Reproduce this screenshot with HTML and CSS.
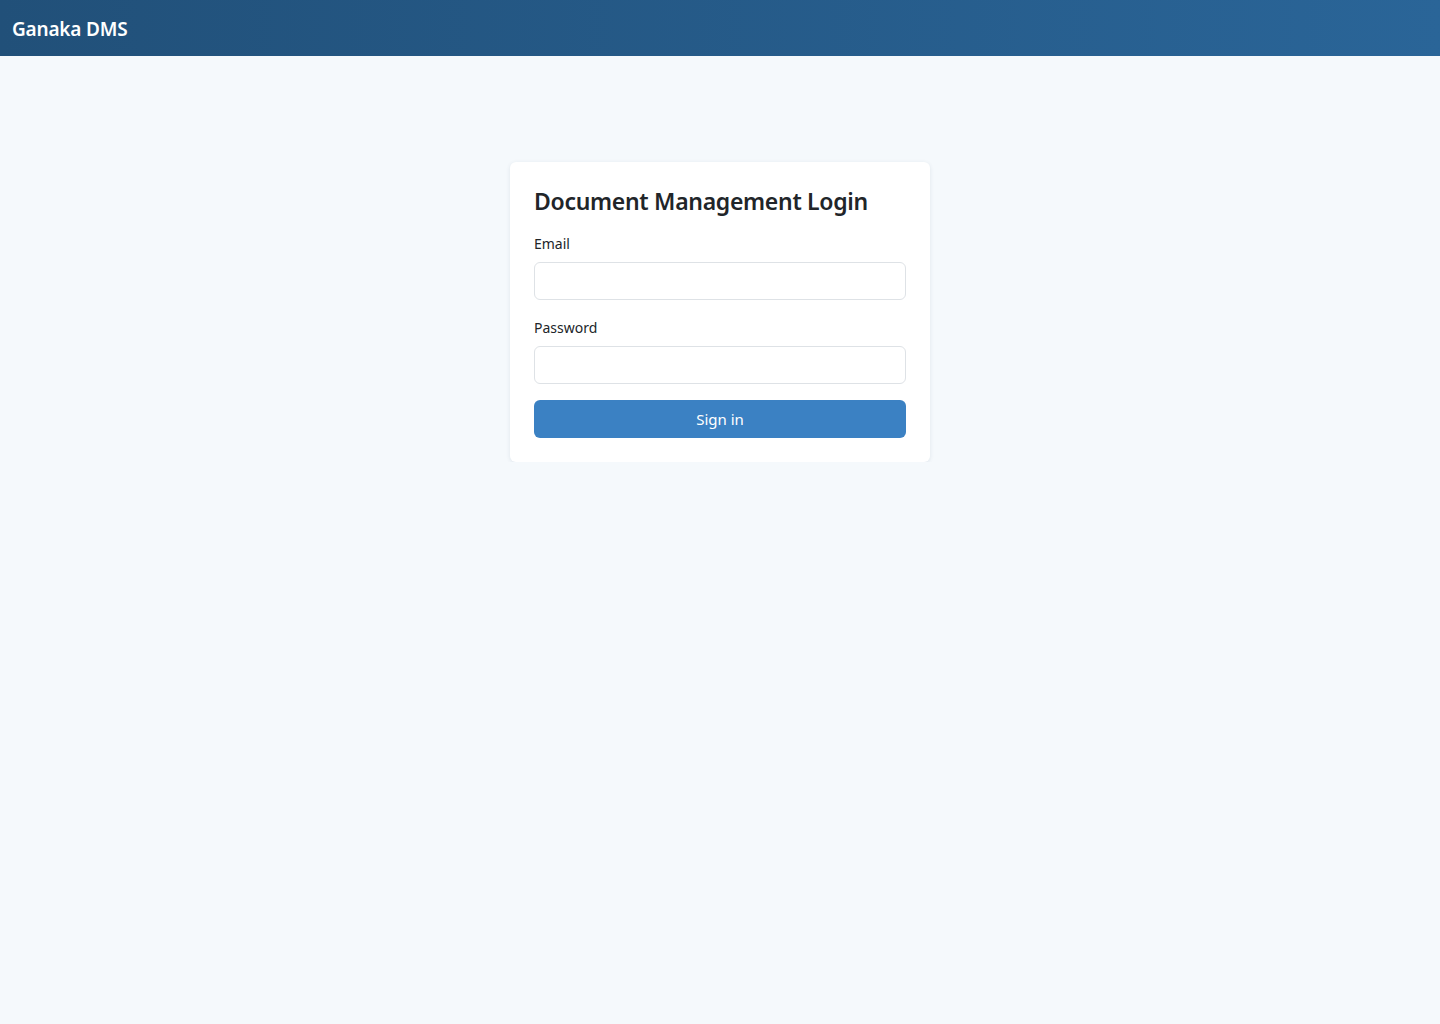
FILE: index.html
```html
<!DOCTYPE html>
<html lang="en">
<head>
  <meta charset="UTF-8">
  <title>Ganaka DMS</title>
  <link rel="stylesheet" href="styles.css">
</head>
<body>
  <header class="topbar">
    <span class="brand">Ganaka DMS</span>
  </header>

  <main class="login-wrap">
    <form class="login-card" onsubmit="return false">
      <h2>Document Management Login</h2>
      <div class="field">
        <label for="email">Email</label>
        <input id="email" type="email">
      </div>
      <div class="field">
        <label for="password">Password</label>
        <input id="password" type="password">
      </div>
      <button type="submit">Sign in</button>
    </form>
  </main>
</body>
</html>
```

FILE: styles.css
```css
body {
  margin: 0;
  font-family: "Noto Sans", "Open Sans", sans-serif;
  background: #f5f9fc;
  color: #212529;
}

.topbar {
  height: 56px;
  display: flex;
  align-items: center;
  padding: 2px 12px 0 12px;
  background: linear-gradient(90deg, #215079 0%, #2a6598 100%);
  box-sizing: border-box;
}
.brand {
  color: #fff;
  font-size: 19px;
  font-weight: 600;
  letter-spacing: -0.2px;
}

.login-wrap {
  display: flex;
  justify-content: center;
  padding-top: 106px;
}

.login-card {
  width: 420px;
  box-sizing: border-box;
  background: #fff;
  border-radius: 6px;
  box-shadow: 0 1px 4px rgba(30, 60, 90, 0.10);
  padding: 24px;
  display: flex;
  flex-direction: column;
}
.login-card h2 {
  margin: 0 0 18px 0;
  font-size: 23px;
  font-weight: 600;
  color: #212529;
  letter-spacing: -0.3px;
  line-height: 30px;
}

.field {
  display: flex;
  flex-direction: column;
  margin-bottom: 16px;
}
.field + .field {
  margin-top: 2px;
}
.field label {
  font-size: 14px;
  line-height: 20px;
  margin-bottom: 8px;
  color: #212529;
}
.field input {
  height: 38px;
  box-sizing: border-box;
  border: 1px solid #dee2e6;
  border-radius: 6px;
  padding: 6px 12px;
  font-size: 16px;
  font-family: inherit;
  background: #fff;
}

.login-card button {
  height: 38px;
  border: none;
  border-radius: 6px;
  background: #3b81c3;
  color: #fff;
  font-size: 15px;
  font-family: inherit;
  cursor: pointer;
}
```
